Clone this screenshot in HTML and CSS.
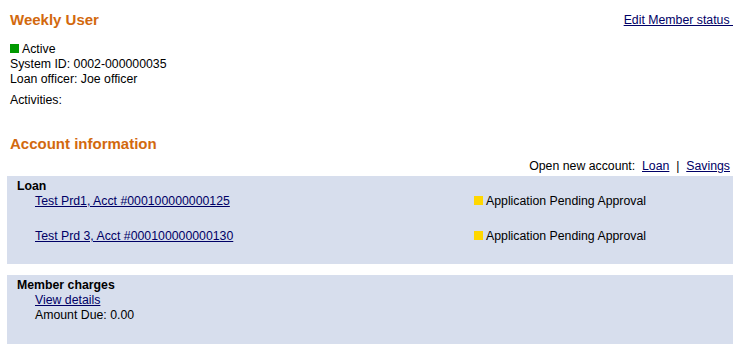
FILE: index.html
```html
<!DOCTYPE html>
<html lang="en">
<head>
    <meta charset="UTF-8">
    <title>Member details</title>
    <link rel="stylesheet" href="styles.css">
</head>
<body>
    <div class="page">
        <div class="header-row">
            <h1>Weekly User</h1>
            <a href="#" class="edit-link">Edit Member status&nbsp;</a>
        </div>

        <div class="member-info">
            <div><span class="dot dot-active"></span>Active</div>
            <div>System ID: 0002-000000035</div>
            <div>Loan officer: Joe officer</div>
        </div>
        <div class="activities">Activities:</div>

        <h2>Account information</h2>
        <div class="open-account">
            Open new account:&nbsp; <a href="#">Loan</a>&nbsp; | &nbsp;<a href="#">Savings</a>
        </div>

        <div class="panel panel-loan">
            <div class="panel-title">Loan</div>
            <div class="acct-row">
                <a href="#">Test Prd1, Acct #000100000000125</a>
                <span><span class="dot dot-pending"></span>Application Pending Approval</span>
            </div>
            <div class="acct-row">
                <a href="#">Test Prd 3, Acct #000100000000130</a>
                <span><span class="dot dot-pending"></span>Application Pending Approval</span>
            </div>
        </div>

        <div class="panel panel-charges">
            <div class="panel-title">Member charges</div>
            <div class="indent"><a href="#">View details</a></div>
            <div class="indent">Amount Due: 0.00</div>
        </div>
    </div>
</body>
</html>
```

FILE: styles.css
```css
body {
    margin: 0;
    font-family: "Liberation Sans", Arial, sans-serif;
    font-size: 12.3px;
    color: #000;
    background-color: white;
}
a {
    color: #000066;
}
.page {
    padding: 0 4px 0 7px;
}
.header-row {
    display: flex;
    justify-content: space-between;
    align-items: center;
    padding-top: 11px;
    height: 18px;
}
h1, h2 {
    margin: 0 0 0 3px;
    font-size: 15px;
    line-height: 18px;
    color: #d2690e;
}
.edit-link {
    line-height: 15px;
}
.member-info {
    margin: 13px 0 0 3px;
    line-height: 15px;
}
.dot {
    display: inline-block;
    width: 9px;
    height: 9px;
    margin-right: 3px;
}
.dot-active {
    background-color: #009900;
}
.dot-pending {
    background-color: #ffd700;
}
.activities {
    margin: 6px 0 0 3px;
    line-height: 15px;
}
h2 {
    margin-top: 27px;
}
.open-account {
    text-align: right;
    line-height: 15px;
    margin-top: 6px;
    padding-right: 3px;
}
.panel {
    background-color: #d7deed;
    padding: 3px 10px 0;
    line-height: 15px;
}
.panel-loan {
    margin-top: 2px;
    height: 85px;
}
.panel-charges {
    margin-top: 11px;
    height: 66px;
}
.panel-title {
    font-weight: bold;
}
.acct-row {
    display: grid;
    grid-template-columns: 439px 1fr;
    padding-left: 18px;
    margin-bottom: 20px;
}
.indent {
    padding-left: 18px;
}
```
